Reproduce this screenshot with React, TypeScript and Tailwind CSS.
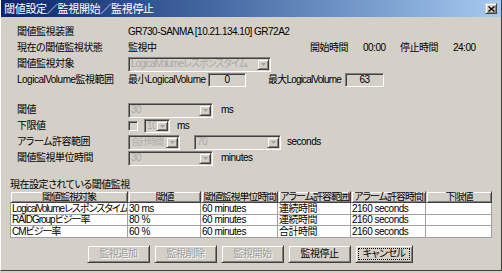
import React from "react";

const sunken =
  "border border-t-[#808080] border-l-[#808080] border-r-white border-b-white shadow-[inset_1px_1px_0_#404040,inset_-1px_-1px_0_#d4d0c8]";
const raised =
  "border border-t-[#d4d0c8] border-l-[#d4d0c8] border-r-[#404040] border-b-[#404040] shadow-[inset_1px_1px_0_#ffffff,inset_-1px_-1px_0_#808080]";

function Arrow() {
  return (
    <div className={`${raised} bg-[#d4d0c8] w-[12px] h-full flex items-center justify-center shrink-0`}>
      <svg width="5" height="3" viewBox="0 0 5 3">
        <polygon points="0,0 5,0 2.5,3" fill="#a0a0a0" />
      </svg>
    </div>
  );
}

function Combo({ text, className, tight }: { text: string; className: string; tight?: boolean }) {
  return (
    <div className={`${sunken} ${className} bg-[#d4d0c8] flex items-stretch p-[1px]`}>
      <div
        className={`flex-1 min-w-0 text-[#a8a8a8] pl-[1px] leading-none flex items-center overflow-hidden ${
          tight ? "tracking-[-1px]" : ""
        }`}
      >
        {text}
      </div>
      <Arrow />
    </div>
  );
}

function Box({ text, className }: { text: string; className: string }) {
  return (
    <div className={`${sunken} ${className} bg-[#d4d0c8] flex items-center justify-center text-black leading-none`}>
      {text}
    </div>
  );
}

function Btn({
  text,
  disabled,
  focus,
  className,
}: {
  text: string;
  disabled?: boolean;
  focus?: boolean;
  className: string;
}) {
  return (
    <div className={`${raised} bg-[#d4d0c8] ${className} h-[18px] flex items-center justify-center p-[2px]`}>
      <div
        className={`w-full h-full flex items-center justify-center leading-none ${
          focus ? "outline outline-1 outline-dotted outline-black -outline-offset-1" : ""
        } ${disabled ? "text-[#9a9a9a] [text-shadow:1px_1px_0_#ffffff]" : "text-black"}`}
      >
        {text}
      </div>
    </div>
  );
}

const cols = ["w-[118px]", "w-[73px]", "w-[77px]", "w-[73px]", "w-[75px]", "w-[66px]"];
const headers = ["閾値監視対象", "閾値", "閾値監視単位時間", "アラーム許容範囲", "アラーム許容時間", "下限値"];
const rows = [
  ["LogicalVolumeレスポンスタイム", "30 ms", "60 minutes", "連続時間", "2160 seconds", ""],
  ["RAIDGroupビジー率", "80 %", "60 minutes", "連続時間", "2160 seconds", ""],
  ["CMビジー率", "60 %", "60 minutes", "合計時間", "2160 seconds", ""],
];
const rowH = ["h-[12px]", "h-[11px]", "h-[12px]"];

export default function App() {
  return (
    <div className="w-[502px] h-[273px] bg-[#d4d0c8] overflow-hidden text-[10px] leading-[12px] tracking-[-0.5px] whitespace-nowrap text-black font-['Liberation_Sans_Narrow','Liberation_Sans','Noto_Sans_CJK_JP',sans-serif] [font-feature-settings:'palt']">
      <div className="h-[271px] border-l border-b border-r border-l-white border-b-[#404040] border-r-[#404040] flex flex-col">
        {/* title bar */}
        <div className="h-[17px] bg-gradient-to-r from-[#0a246a] to-[#a6caf0] flex items-center pl-[3px] pr-[4px] shrink-0">
          <div className="text-white text-[11px] tracking-[-0.3px] flex-1">閾値設定／監視開始／監視停止</div>
          <div className={`${raised} bg-[#d4d0c8] w-[12px] h-[11px] flex items-center justify-center`}>
            <svg width="7" height="6" viewBox="0 0 7 6">
              <path d="M0.5 0.5 L6.5 5.5 M6.5 0.5 L0.5 5.5" stroke="#000" strokeWidth="1.4" />
            </svg>
          </div>
        </div>

        {/* form */}
        <div className="pt-[7px] pl-[16px]">
          <div className="flex items-center h-[16px]">
            <div className="w-[111px]">閾値監視装置</div>
            <div>GR730-SANMA [10.21.134.10] GR72A2</div>
          </div>
          <div className="flex items-center h-[16px]">
            <div className="w-[111px]">現在の閾値監視状態</div>
            <div className="w-[182px]">監視中</div>
            <div className="w-[53px]">開始時間</div>
            <div className="w-[37px]">00:00</div>
            <div className="w-[53px]">停止時間</div>
            <div>24:00</div>
          </div>
          <div className="flex items-center h-[16px]">
            <div className="w-[111px]">閾値監視対象</div>
            <Combo text="LogicalVolumeレスポンスタイム" tight className="w-[143px] h-[15px]" />
          </div>
          <div className="flex items-center h-[16px]">
            <div className="w-[111px]">LogicalVolume監視範囲</div>
            <div className="w-[80px]">最小LogicalVolume</div>
            <Box text="0" className="w-[38px] h-[14px]" />
            <div className="ml-[22px] tracking-[-0.8px]">最大LogicalVolume</div>
            <Box text="63" className="ml-[4px] w-[39px] h-[14px]" />
          </div>

          <div className="h-[14px]" />

          <div className="flex items-center h-[16px]">
            <div className="w-[111px]">閾値</div>
            <Combo text="30" className="w-[85px] h-[15px]" />
            <div className="ml-[8px]">ms</div>
          </div>
          <div className="flex items-center h-[16px]">
            <div className="w-[111px]">下限値</div>
            <div className={`${sunken} w-[10px] h-[10px] bg-[#d4d0c8]`} />
            <Combo text="10" className="ml-[6px] w-[26px] h-[14px]" />
            <div className="ml-[7px]">ms</div>
          </div>
          <div className="flex items-center h-[16px]">
            <div className="w-[111px]">アラーム許容範囲</div>
            <Combo text="合計時間" tight className="w-[52px] h-[15px] text-[9px]" />
            <Combo text="70" className="ml-[14px] w-[87px] h-[15px]" />
            <div className="ml-[6px]">seconds</div>
          </div>
          <div className="flex items-center h-[16px]">
            <div className="w-[111px]">閾値監視単位時間</div>
            <Combo text="30" className="w-[85px] h-[15px]" />
            <div className="ml-[8px]">minutes</div>
          </div>
        </div>

        {/* table */}
        <div className="pl-[9px] mt-[13px]">
          <div className="h-[12px] flex items-center">現在設定されている閾値監視</div>
          <div className="w-[482px]">
            <div className="flex h-[12px]">
              {headers.map((h, i) => (
                <div
                  key={i}
                  className={`${cols[i]} ${raised} bg-[#d4d0c8] flex items-center justify-center leading-none tracking-[-1px] overflow-hidden`}
                >
                  {h}
                </div>
              ))}
            </div>
            {rows.map((r, ri) => (
              <div key={ri} className={`flex ${rowH[ri]} bg-white border-b border-[#a0a0a0]`}>
                {r.map((c, ci) => (
                  <div
                    key={ci}
                    className={`${cols[ci]} border-r border-[#a0a0a0] ${
                      ci === 0 ? "border-l tracking-[-1px]" : ""
                    } pl-[1px] flex items-center overflow-hidden leading-none`}
                  >
                    {c}
                  </div>
                ))}
              </div>
            ))}
          </div>
        </div>

        {/* buttons */}
        <div className="flex pl-[86px] gap-[4px] mt-[7px]">
          <Btn text="監視追加" disabled className="w-[63px]" />
          <Btn text="監視削除" disabled className="w-[63px]" />
          <Btn text="監視開始" disabled className="w-[63px]" />
          <Btn text="監視停止" className="w-[63px]" />
          <Btn text="キャンセル" focus className="w-[58px]" />
        </div>
      </div>
    </div>
  );
}
